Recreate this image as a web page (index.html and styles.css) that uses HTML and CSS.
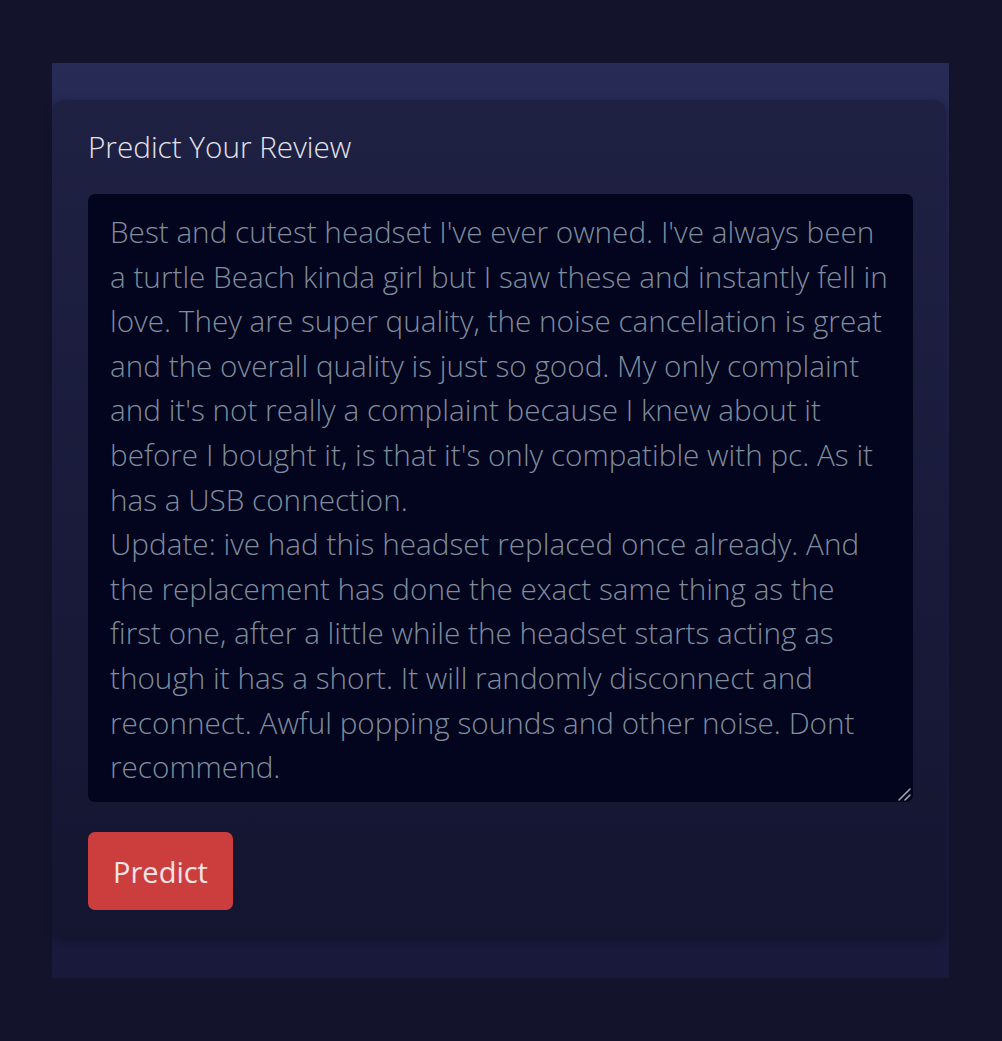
FILE: index.html
```html
<!DOCTYPE html>
<html lang="en">
<head>
<meta charset="utf-8">
<title>Predict Your Review</title>
<link rel="stylesheet" href="styles.css">
</head>
<body>
<main class="panel">
  <section class="card">
    <h2 class="title">Predict Your Review</h2>
    <div class="field">
      <textarea class="review" spellcheck="false">Best and cutest headset I've ever owned. I've always been a turtle Beach kinda girl but I saw these and instantly fell in love. They are super quality, the noise cancellation is great and the overall quality is just so good. My only complaint and it's not really a complaint because I knew about it before I bought it, is that it's only compatible with pc. As it has a USB connection.
Update: ive had this headset replaced once already. And the replacement has done the exact same thing as the first one, after a little while the headset starts acting as though it has a short. It will randomly disconnect and reconnect. Awful popping sounds and other noise. Dont recommend.</textarea>
      <svg class="grip" width="14" height="14" viewBox="0 0 14 14" aria-hidden="true">
        <line x1="2" y1="13" x2="13" y2="2" stroke="#a3a3ad" stroke-width="1.6" stroke-linecap="round"/>
        <line x1="8" y1="13" x2="13" y2="8" stroke="#a3a3ad" stroke-width="1.6" stroke-linecap="round"/>
      </svg>
    </div>
    <div class="actions">
      <button class="predict" type="button">Predict</button>
    </div>
  </section>
</main>
</body>
</html>
```
FILE: styles.css
```css
html, body {
  margin: 0;
  padding: 0;
}
body {
  background: #13142c;
  font-family: "Open Sans", "Liberation Sans", sans-serif;
  min-height: 1041px;
  padding-top: 63px;
  box-sizing: border-box;
}
.panel {
  margin-left: 52px;
  width: 897px;
  padding: 37px 0 38px;
  background: linear-gradient(to bottom, #282b56 0, #262952 37px, #1c1d42 500px, #191a3b 100%);
}
.card {
  box-sizing: border-box;
  height: 840px;
  width: 894px;
  border-radius: 12px;
  padding: 35px 33px 30px 36px;
  background: linear-gradient(to bottom, #1f2143 0%, #1a1b3b 50%, #141530 100%);
  box-shadow: 0 2px 6px rgba(10, 10, 30, 0.35);
  display: flex;
  flex-direction: column;
}
.title {
  margin: 0;
  font-size: 29.7px;
  font-weight: 300;
  line-height: 24px;
  color: #e4e4ee;
}
.field {
  position: relative;
  margin-top: 35px;
  width: 825px;
  height: 608px;
}
.review {
  display: block;
  box-sizing: border-box;
  width: 825px;
  height: 608px;
  padding: 16px 22px 12px;
  border: none;
  border-radius: 7px;
  background: #03041d;
  color: #7f8d9d;
  font-family: "Open Sans", "Liberation Sans", sans-serif;
  font-weight: 300;
  font-size: 29.7px;
  line-height: 44.6px;
  overflow: hidden;
  resize: none;
  outline: none;
}
.grip {
  position: absolute;
  right: 2px;
  bottom: 1px;
  pointer-events: none;
}
.actions {
  margin-top: 30px;
  display: flex;
}
.predict {
  width: 145px;
  height: 78px;
  border: none;
  border-radius: 7px;
  background: #cc3e3e;
  color: #f4e4e6;
  font-family: "Open Sans", "Liberation Sans", sans-serif;
  font-size: 29px;
  font-weight: 400;
  padding: 0;
  cursor: pointer;
}
```
